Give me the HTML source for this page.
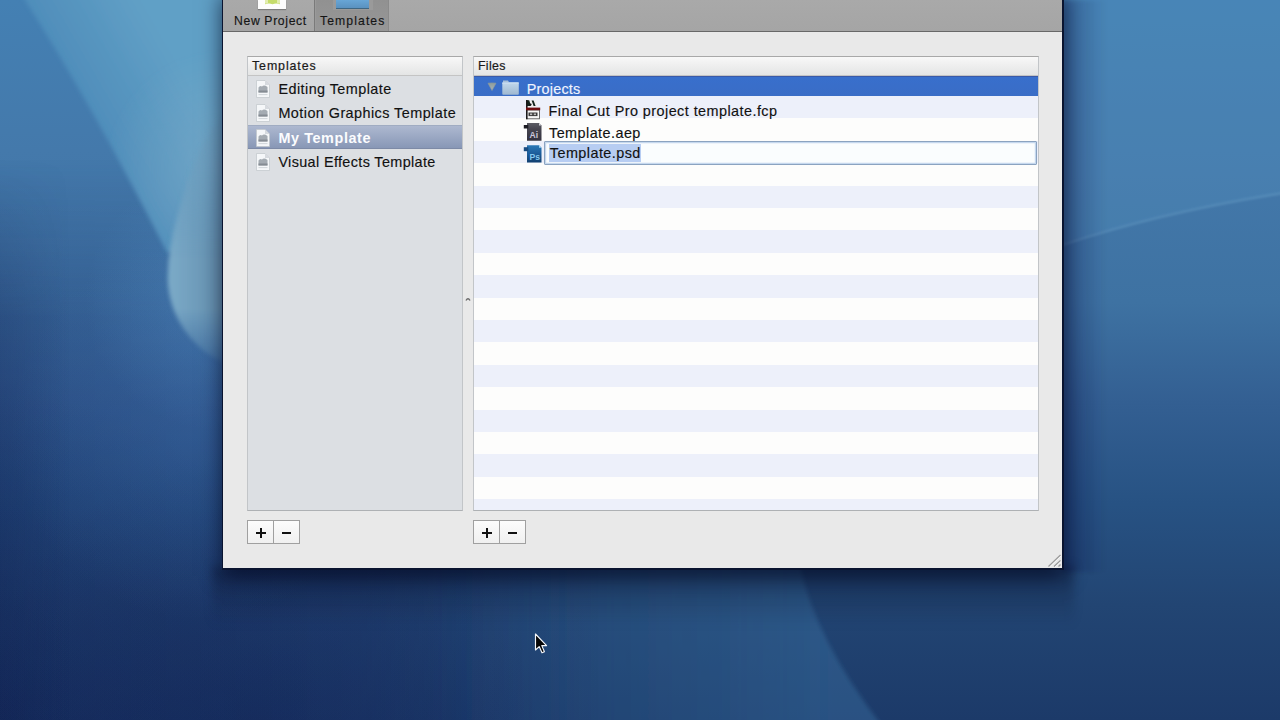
<!DOCTYPE html>
<html><head><meta charset="utf-8">
<style>
html,body{margin:0;padding:0;}
body{width:1280px;height:720px;overflow:hidden;position:relative;font-family:"Liberation Sans",sans-serif;background:#2d5f98;}
.a{position:absolute;}
#bg{position:absolute;left:0;top:0;}
#shadow{position:absolute;left:222px;top:-10px;width:842px;height:580px;background:#0a1430;box-shadow:0 6px 20px rgba(0,5,30,0.7);}
#win{position:absolute;left:223px;top:0;width:839px;height:568px;background:#e9e9e9;overflow:hidden;}
#toolbar{position:absolute;left:0;top:0;width:840px;height:31px;background:linear-gradient(#a9a9a9,#a5a5a5);}
#tbline{position:absolute;left:0;top:31px;width:840px;height:1px;background:#686868;}
#seltab{position:absolute;left:91px;top:0;width:75px;height:31px;background:linear-gradient(#919191,#979797);box-shadow:inset 1px 0 0 #7a7a7a,inset 2px 0 0 #9a9a9a,inset -1px 0 0 #8a8a8a;}
.tl{position:absolute;top:13px;font-size:12.2px;color:#151515;white-space:nowrap;line-height:16px;-webkit-text-stroke:0.15px currentColor;}
.panel{position:absolute;box-sizing:border-box;border:1px solid #c2c5c8;border-top-color:#a8a8a8;border-bottom-color:#aeb1b4;}
#lp{left:247px;top:56px;width:216px;height:455px;background:#dcdfe3;overflow:hidden;}
#rp{left:473px;top:56px;width:566px;height:455px;background:#fdfdfc;overflow:hidden;}
.hdr{position:absolute;left:0;top:0;right:0;height:18px;background:linear-gradient(#f8f8f8,#f0f0f0 40%,#e4e5e5);border-bottom:1px solid #c4c4c4;}
.ht{position:absolute;left:4px;top:0;font-size:12.4px;color:#1a1a1a;line-height:18px;white-space:nowrap;-webkit-text-stroke:0.2px currentColor;}
.it{position:absolute;font-size:14.4px;letter-spacing:0.45px;color:#111;white-space:nowrap;line-height:18px;-webkit-text-stroke:0.15px currentColor;}
.stripe{position:absolute;left:0;right:0;height:22.4px;background:#edf0fa;}
.btn{position:absolute;box-sizing:border-box;height:24px;width:27px;border:1px solid #a0a0a0;background:linear-gradient(#fcfcfc,#f0f0f0);}
.ico{position:absolute;}
</style></head><body>
<svg id="bg" width="1280" height="720" viewBox="0 0 1280 720">
  <defs>
    <linearGradient id="g1" x1="0" y1="0" x2="0" y2="720" gradientUnits="userSpaceOnUse">
      <stop offset="0" stop-color="#4480b3"/>
      <stop offset="0.21" stop-color="#4479ab"/>
      <stop offset="0.42" stop-color="#3e72a2"/>
      <stop offset="0.56" stop-color="#335f92"/>
      <stop offset="0.70" stop-color="#275283"/>
      <stop offset="0.84" stop-color="#224573"/>
      <stop offset="1" stop-color="#1c3a69"/>
    </linearGradient>
    <linearGradient id="gl" x1="0" y1="0" x2="600" y2="0" gradientUnits="userSpaceOnUse">
      <stop offset="0" stop-color="#142060" stop-opacity="0.24"/>
      <stop offset="0.6" stop-color="#142060" stop-opacity="0.2"/>
      <stop offset="1" stop-color="#142060" stop-opacity="0"/>
    </linearGradient>
    <linearGradient id="glv" x1="0" y1="0" x2="0" y2="720" gradientUnits="userSpaceOnUse">
      <stop offset="0" stop-color="#fff" stop-opacity="0"/>
      <stop offset="0.22" stop-color="#fff" stop-opacity="0"/>
      <stop offset="0.44" stop-color="#fff" stop-opacity="1"/>
      <stop offset="1" stop-color="#fff" stop-opacity="1"/>
    </linearGradient>
    <mask id="mlv"><rect width="1280" height="720" fill="url(#glv)"/></mask>
    <radialGradient id="rbl" cx="0" cy="720" r="330" gradientUnits="userSpaceOnUse">
      <stop offset="0" stop-color="#081440" stop-opacity="0.25"/>
      <stop offset="1" stop-color="#081440" stop-opacity="0"/>
    </radialGradient>
    <linearGradient id="gw" x1="60" y1="60" x2="147" y2="10" gradientUnits="userSpaceOnUse">
      <stop offset="0" stop-color="#4f8ebb"/>
      <stop offset="0.15" stop-color="#5290bc"/>
      <stop offset="1" stop-color="#61a0c6"/>
    </linearGradient>
    <linearGradient id="gc" x1="168" y1="0" x2="240" y2="0" gradientUnits="userSpaceOnUse">
      <stop offset="0" stop-color="#7cabc8"/>
      <stop offset="0.5" stop-color="#6c99b8"/>
      <stop offset="1" stop-color="#6690ae"/>
    </linearGradient>
    <linearGradient id="gb" x1="430" y1="0" x2="830" y2="0" gradientUnits="userSpaceOnUse">
      <stop offset="0" stop-color="#3b74a6" stop-opacity="0"/>
      <stop offset="1" stop-color="#3b74a6" stop-opacity="0.42"/>
    </linearGradient>
    <radialGradient id="rglow" cx="215" cy="300" r="130" gradientUnits="userSpaceOnUse">
      <stop offset="0" stop-color="#5a9ad0" stop-opacity="0.35"/>
      <stop offset="1" stop-color="#5a9ad0" stop-opacity="0"/>
    </radialGradient>
    <linearGradient id="gcm" x1="0" y1="90" x2="0" y2="370" gradientUnits="userSpaceOnUse">
      <stop offset="0" stop-color="#fff" stop-opacity="0"/>
      <stop offset="0.6" stop-color="#fff" stop-opacity="1"/>
      <stop offset="0.78" stop-color="#fff" stop-opacity="1"/>
      <stop offset="1" stop-color="#fff" stop-opacity="0.1"/>
    </linearGradient>
    <radialGradient id="rglow2" cx="200" cy="430" r="190" gradientUnits="userSpaceOnUse">
      <stop offset="0" stop-color="#4a80c0" stop-opacity="0.22"/>
      <stop offset="1" stop-color="#4a80c0" stop-opacity="0"/>
    </radialGradient>
    <linearGradient id="gvig" x1="0" y1="0" x2="70" y2="0" gradientUnits="userSpaceOnUse">
      <stop offset="0" stop-color="#0a1440" stop-opacity="0.18"/>
      <stop offset="1" stop-color="#0a1440" stop-opacity="0"/>
    </linearGradient>
    <mask id="mcres" maskUnits="userSpaceOnUse" x="0" y="0" width="1280" height="720"><rect width="1280" height="720" fill="url(#gcm)"/></mask>
    <linearGradient id="grs" x1="1062" y1="0" x2="1107" y2="0" gradientUnits="userSpaceOnUse">
      <stop offset="0" stop-color="#0a1840" stop-opacity="0.25"/>
      <stop offset="1" stop-color="#0a1840" stop-opacity="0"/>
    </linearGradient>
    <radialGradient id="rwedge" cx="225" cy="170" r="120" gradientUnits="userSpaceOnUse">
      <stop offset="0" stop-color="#82aec8" stop-opacity="0.55"/>
      <stop offset="1" stop-color="#82aec8" stop-opacity="0"/>
    </radialGradient>
    <radialGradient id="rbl2" cx="260" cy="720" r="280" gradientUnits="userSpaceOnUse">
      <stop offset="0" stop-color="#0a1440" stop-opacity="0.2"/>
      <stop offset="1" stop-color="#0a1440" stop-opacity="0"/>
    </radialGradient>
    <filter id="b05" x="-10%" y="-50%" width="120%" height="200%"><feGaussianBlur stdDeviation="0.6"/></filter>
    <filter id="b1" x="-20%" y="-20%" width="140%" height="140%"><feGaussianBlur stdDeviation="1.2"/></filter>
    <filter id="b2" x="-20%" y="-20%" width="140%" height="140%"><feGaussianBlur stdDeviation="2"/></filter>
    <filter id="b3" x="-20%" y="-20%" width="140%" height="140%"><feGaussianBlur stdDeviation="3"/></filter>
  </defs>
  <rect width="1280" height="720" fill="url(#g1)"/>
  <rect width="600" height="720" fill="url(#gl)" mask="url(#mlv)"/>
  <rect width="400" height="720" fill="url(#rbl)"/>
  <rect x="0" y="420" width="560" height="300" fill="url(#rbl2)"/>
  <rect x="60" y="150" width="200" height="300" fill="url(#rglow)"/>
  <rect x="0" y="230" width="400" height="400" fill="url(#rglow2)"/>
  <rect x="0" y="0" width="70" height="720" fill="url(#gvig)" mask="url(#mlv)"/>
  <!-- top-left light wedge -->
  <path d="M22 -5 Q95 110 167 252 L240 252 L240 -5Z" fill="url(#gw)" filter="url(#b2)"/>
  <path d="M22 -5 Q95 110 167 252 L240 252 L240 -5Z" fill="url(#rwedge)" filter="url(#b2)"/>
  <!-- crescent sheen -->
  <path d="M240 100 Q200 130 182 200 Q166 250 168 285 Q172 325 205 352 Q225 366 240 368Z" fill="url(#gc)" filter="url(#b2)" mask="url(#mcres)"/>
  <!-- right-top lighter -->
  <path d="M1050 -5 L1290 -5 L1290 192 Q1170 208 1050 247Z" fill="#5a9ac6" opacity="0.22" filter="url(#b1)"/>
  <path d="M1062 245 Q1160 212 1290 192" stroke="#7ab0d4" stroke-width="2.5" fill="none" opacity="0.32" filter="url(#b1)"/>
  <rect x="1062" y="0" width="45" height="572" fill="url(#grs)" filter="url(#b2)"/>
  <!-- bottom middle lighter -->
  <path d="M430 565 L800 565 Q815 640 885 730 L430 730Z" fill="url(#gb)" filter="url(#b2)"/>
</svg>

<div class="a" style="left:212px;top:566px;width:862px;height:60px;background:linear-gradient(rgba(5,10,35,0.38),rgba(5,10,35,0.2) 45%,rgba(5,10,35,0));filter:blur(5px);"></div>
<div id="shadow"></div>
<div id="win">
  <div id="toolbar"></div>
  <div id="seltab"></div>
  <div id="tbline"></div>
  <div class="a" style="left:35px;top:0;width:28px;height:9px;background:#fdfdfd;box-shadow:0 1px 1px rgba(0,0,0,0.25);"></div>
  <svg class="a" style="left:42px;top:0" width="15" height="5" viewBox="0 0 15 5"><path d="M0 0H15V4.2Q11 2.6 7.5 4.2Q4 2.6 0 4.2Z" fill="#c5dc6a"/><path d="M0 0H3V3.5H0Z M12 0H15V3.5H12Z" fill="#e2edb0"/></svg>
  <div class="a" style="left:110px;top:0;width:40px;height:10px;background:#9a9a9a;"></div><div class="a" style="left:113px;top:0;width:33px;height:8px;background:linear-gradient(#68a6d6,#5a92c0);border-bottom:1px solid #3f6682;"></div>
  <div class="tl" style="left:11px;letter-spacing:0.65px;">New Project</div>
  <div class="tl" style="left:97px;letter-spacing:1.1px;">Templates</div>
</div>

<div id="lp" class="panel">
  <div class="hdr"><span class="ht" style="letter-spacing:0.9px">Templates</span></div>
  <div class="a" style="left:0;right:0;top:68px;height:24px;background:linear-gradient(#adb8d0,#8897b6);border-top:1px solid #a0acc2;border-bottom:1px solid #7d8aa6;box-sizing:border-box;"></div>
  <div class="it" style="left:30.4px;top:23px;">Editing Template</div>
  <div class="it" style="left:30.4px;top:47.4px;">Motion Graphics Template</div>
  <div class="it" style="left:30.4px;top:71.8px;font-weight:bold;letter-spacing:0.6px;color:#fbfcfe;-webkit-text-stroke:0;">My Template</div>
  <div class="it" style="left:30.4px;top:96.2px;letter-spacing:0.37px;">Visual Effects Template</div>
  <svg class="ico" style="left:7.5px;top:22.7px" width="14" height="18" viewBox="0 0 14 18"><path d="M0.5 0.5H9L13.5 5V17.5H0.5Z" fill="#f5f7f9" stroke="#c0c5ca" stroke-width="0.7"/><path d="M9 0.5V5H13.5Z" fill="#d6dadf"/><path d="M2.5 12.5V7.5Q4 5 6 6.5Q8 4.5 11.5 7V12.5Z" fill="#a4abb2"/><rect x="2.5" y="10.5" width="9" height="2" fill="#858c93"/><rect x="2.5" y="14.2" width="9" height="0.9" fill="#cdd2d6"/></svg>
  <svg class="ico" style="left:7.5px;top:47.1px" width="14" height="18" viewBox="0 0 14 18"><path d="M0.5 0.5H9L13.5 5V17.5H0.5Z" fill="#f5f7f9" stroke="#c0c5ca" stroke-width="0.7"/><path d="M9 0.5V5H13.5Z" fill="#d6dadf"/><path d="M2.5 12.5V7.5Q4 5 6 6.5Q8 4.5 11.5 7V12.5Z" fill="#a4abb2"/><rect x="2.5" y="10.5" width="9" height="2" fill="#858c93"/><rect x="2.5" y="14.2" width="9" height="0.9" fill="#cdd2d6"/></svg>
  <svg class="ico" style="left:7.5px;top:71.5px" width="14" height="18" viewBox="0 0 14 18"><path d="M0.5 0.5H9L13.5 5V17.5H0.5Z" fill="#f5f7f9" stroke="#c0c5ca" stroke-width="0.7"/><path d="M9 0.5V5H13.5Z" fill="#d6dadf"/><path d="M2.5 12.5V7.5Q4 5 6 6.5Q8 4.5 11.5 7V12.5Z" fill="#a4abb2"/><rect x="2.5" y="10.5" width="9" height="2" fill="#858c93"/><rect x="2.5" y="14.2" width="9" height="0.9" fill="#cdd2d6"/></svg>
  <svg class="ico" style="left:7.5px;top:95.9px" width="14" height="18" viewBox="0 0 14 18"><path d="M0.5 0.5H9L13.5 5V17.5H0.5Z" fill="#f5f7f9" stroke="#c0c5ca" stroke-width="0.7"/><path d="M9 0.5V5H13.5Z" fill="#d6dadf"/><path d="M2.5 12.5V7.5Q4 5 6 6.5Q8 4.5 11.5 7V12.5Z" fill="#a4abb2"/><rect x="2.5" y="10.5" width="9" height="2" fill="#858c93"/><rect x="2.5" y="14.2" width="9" height="0.9" fill="#cdd2d6"/></svg>
</div>

<div id="rp" class="panel">
  <div class="stripe" style="top:39px"></div>
  <div class="stripe" style="top:83.8px"></div>
  <div class="stripe" style="top:128.6px"></div>
  <div class="stripe" style="top:173.4px"></div>
  <div class="stripe" style="top:218.2px"></div>
  <div class="stripe" style="top:263px"></div>
  <div class="stripe" style="top:307.8px"></div>
  <div class="stripe" style="top:352.6px"></div>
  <div class="stripe" style="top:397.4px"></div>
  <div class="stripe" style="top:442.2px"></div>
  <div class="hdr"><span class="ht" style="letter-spacing:0.3px">Files</span></div>
  <div class="a" style="left:0;right:0;top:19px;height:20px;background:linear-gradient(#386fcc,#3a6dc6);border-top:1px solid #3a5aa8;box-sizing:border-box;"></div>
  <svg class="ico" style="left:13px;top:25px" width="10" height="9" viewBox="0 0 10 9"><defs><linearGradient id="gtri" x1="0" y1="0" x2="0" y2="1"><stop offset="0" stop-color="#8e9c9a"/><stop offset="1" stop-color="#a9b4b8"/></linearGradient></defs><path d="M1 1.2Q5 0.6 9 1.2L5 8.6Z" fill="url(#gtri)" stroke="#8e9c9a" stroke-width="0.6" stroke-linejoin="round"/></svg>
  <svg class="ico" style="left:28px;top:23px" width="17" height="16" viewBox="0 0 17 16"><defs><linearGradient id="gfold" x1="0" y1="0" x2="0" y2="1"><stop offset="0" stop-color="#c2d8ec"/><stop offset="0.5" stop-color="#b0c8de"/><stop offset="1" stop-color="#9fb8d0"/></linearGradient></defs><path d="M1 0.5H6L7 2.2H1Z" fill="#a8c0d8"/><rect x="0.3" y="2.4" width="16.5" height="12.4" rx="0.8" fill="url(#gfold)"/><rect x="0.3" y="2.4" width="16.5" height="1" fill="#d4e4f2"/></svg>
  <div class="it" style="left:52.8px;top:23.3px;color:#f0f4ff;letter-spacing:0.2px;">Projects</div>
  <!-- FCP icon -->
  <svg class="ico" style="left:51px;top:43px" width="16" height="20" viewBox="0 0 16 20"><rect x="1.5" y="10" width="13" height="8.8" fill="#f7f7f7" stroke="#5a5a5a" stroke-width="0.9"/><path d="M1 0.3L11.5 0.8L12 7.6L1 7.6Z" fill="#f2eeee"/><path d="M1 0.3H4.2L6 6H1Z M6.6 0.5H8.6L10.6 6H8.6Z" fill="#14241c"/><circle cx="5.5" cy="4.5" r="1.1" fill="#111"/><rect x="1" y="0" width="1.6" height="19.2" fill="#1a1a1a"/><rect x="1" y="7.6" width="14.2" height="2.6" fill="#6e0e10"/><rect x="3.5" y="12.5" width="9" height="3.6" fill="#3b3b3b"/><rect x="5" y="13.5" width="2.2" height="1.6" fill="#bdbdbd"/><rect x="8.8" y="13.5" width="2.2" height="1.6" fill="#bdbdbd"/></svg>
  <div class="it" style="left:74.6px;top:44.6px;">Final Cut Pro project template.fcp</div>
  <!-- AEP icon -->
  <svg class="ico" style="left:49px;top:65px" width="20" height="20" viewBox="0 0 20 20"><defs><linearGradient id="gae" x1="0" y1="0" x2="0" y2="1"><stop offset="0" stop-color="#5c5c64"/><stop offset="0.35" stop-color="#46454f"/><stop offset="1" stop-color="#34323f"/></linearGradient></defs><path d="M4 1 H16 L18.5 3.5 V18.8 H4Z" fill="url(#gae)"/><path d="M16 1 L18.5 3.5 H16Z" fill="#d0d0d4"/><rect x="0.8" y="3" width="4.5" height="3.5" fill="#1c1c24"/><text x="6.6" y="16.2" font-family="Liberation Sans" font-size="8.6" font-weight="bold" fill="#cbc7da">Ai</text></svg>
  <div class="it" style="left:75px;top:67px;">Template.aep</div>
  <!-- PSD icon -->
  <svg class="ico" style="left:49px;top:87px" width="20" height="20" viewBox="0 0 20 20"><defs><linearGradient id="gps" x1="0" y1="0" x2="0" y2="1"><stop offset="0" stop-color="#2a78b6"/><stop offset="0.5" stop-color="#1c5c9a"/><stop offset="1" stop-color="#12406f"/></linearGradient></defs><path d="M4 1.2 H16 L18.5 3.7 V18.5 H4Z" fill="url(#gps)"/><path d="M16 1.2 L18.5 3.7 H16Z" fill="#9ad6f2"/><rect x="0.8" y="3.2" width="4.5" height="4" fill="#1a4c80"/><text x="6.6" y="16.2" font-family="Liberation Sans" font-size="8.6" font-weight="bold" fill="#86c8ef">Ps</text></svg>
  <!-- edit field -->
  <div class="a" style="left:70.2px;top:83.7px;width:493px;height:24.3px;box-sizing:border-box;border:1.5px solid #8ba3c0;box-shadow:inset 0 0 0 1.2px #c5d8ee;background:#fafdfe;border-radius:1px;"></div>
  <div class="a" style="left:74.9px;top:86.5px;width:92px;height:18px;background:#b7cdf2;"></div>
  <div class="it" style="left:75.8px;top:87.2px;">Template.psd</div>
</div>

<div class="btn" style="left:247px;top:520px;"></div>
<div class="btn" style="left:273px;top:520px;"></div>
<div class="btn" style="left:473px;top:520px;"></div>
<div class="btn" style="left:499px;top:520px;"></div>
<div class="a" style="left:256px;top:532px;width:10px;height:2.4px;background:#111"></div>
<div class="a" style="left:259.8px;top:528.2px;width:2.4px;height:9.6px;background:#111"></div>
<div class="a" style="left:282px;top:532px;width:9px;height:2.3px;background:#111"></div>
<div class="a" style="left:482px;top:532px;width:10px;height:2.4px;background:#111"></div>
<div class="a" style="left:485.8px;top:528.2px;width:2.4px;height:9.6px;background:#111"></div>
<div class="a" style="left:508px;top:532px;width:9px;height:2.3px;background:#111"></div>
<svg class="a" style="left:465px;top:296px" width="6" height="6" viewBox="0 0 6 6"><path d="M1 4.5Q3 1 5 4.5" stroke="#6a6a6a" stroke-width="1.4" fill="none"/></svg>

<svg class="a" style="left:1046px;top:553px" width="16" height="15" viewBox="0 0 16 15"><path d="M2.5 13.5L14.5 2M8 13.5L14.5 7.5M12.5 13.5L14.5 11.5" stroke="#9a9a9a" stroke-width="1.3" fill="none"/><path d="M3.5 14L15 3M9 14L15 8.5" stroke="#fff" stroke-width="0.8" fill="none" opacity="0.8"/></svg>
<svg class="a" style="left:533px;top:632px" width="16" height="24" viewBox="0 0 16 24"><path d="M2.5 2V18L6.2 14.6L9 20.8L11.4 19.8L8.8 13.6H13.6Z" fill="#050505" stroke="#f4f6fa" stroke-width="1.15" stroke-linejoin="round"/></svg>
</body></html>
